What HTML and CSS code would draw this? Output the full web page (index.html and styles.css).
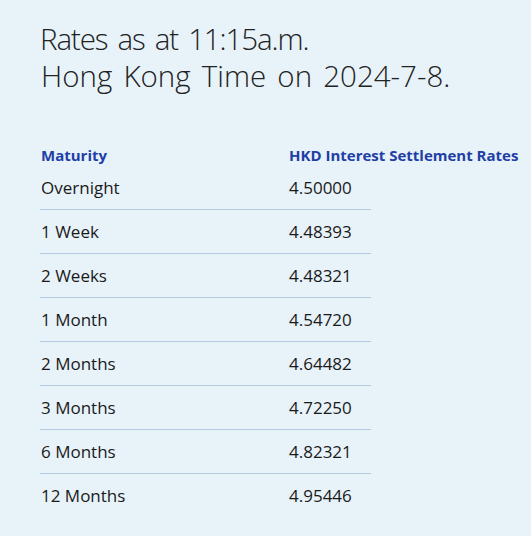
FILE: index.html
```html
<!DOCTYPE html>
<html lang="en">
<head>
<meta charset="utf-8">
<title>HKD Interest Settlement Rates</title>
<link rel="stylesheet" href="styles.css">
</head>
<body>
<main class="page">
  <h1 class="title"><span class="l1">Rates as at 11:15a.m.</span><br><span class="l2">Hong Kong Time on 2024-7-8.</span></h1>
  <div class="rates">
    <div class="row head"><span>Maturity</span><span class="nowrap">HKD Interest Settlement Rates</span></div>
    <div class="row"><span>Overnight</span><span>4.50000</span></div>
    <div class="row"><span>1 Week</span><span>4.48393</span></div>
    <div class="row"><span>2 Weeks</span><span>4.48321</span></div>
    <div class="row"><span>1 Month</span><span>4.54720</span></div>
    <div class="row"><span>2 Months</span><span>4.64482</span></div>
    <div class="row"><span>3 Months</span><span>4.72250</span></div>
    <div class="row"><span>6 Months</span><span>4.82321</span></div>
    <div class="row last"><span>12 Months</span><span>4.95446</span></div>
  </div>
</main>
</body>
</html>
```
FILE: styles.css
```css
html, body {
  margin: 0;
  background: #e7f2f9;
}
.page {
  padding: 20px 0 0 40px;
  font-family: "Open Sans", "Noto Sans", sans-serif;
  color: #1a1a1a;
}
.title {
  margin: 0;
  font-weight: 300;
  font-size: 29.5px;
  line-height: 37px;
  color: #222;
  word-spacing: 3.5px;
}
.title .l1 { letter-spacing: -1.1px; }
.title .l2 { padding-left: 1px; }
.rates {
  margin-top: 51px;
  width: 331px;
}
.row {
  display: grid;
  grid-template-columns: 248px 83px;
  height: 43px;
  align-items: center;
  border-bottom: 1px solid #b3cbe2;
  font-size: 17px;
}
.row span { padding-left: 1px; }
.row.head {
  height: 21px;
  border-bottom: none;
  font-size: 15px;
  line-height: 20px;
  font-weight: 700;
  color: #1f3ea6;
  align-items: start;
}
.row.last { border-bottom: none; }
.nowrap { white-space: nowrap; }
```
